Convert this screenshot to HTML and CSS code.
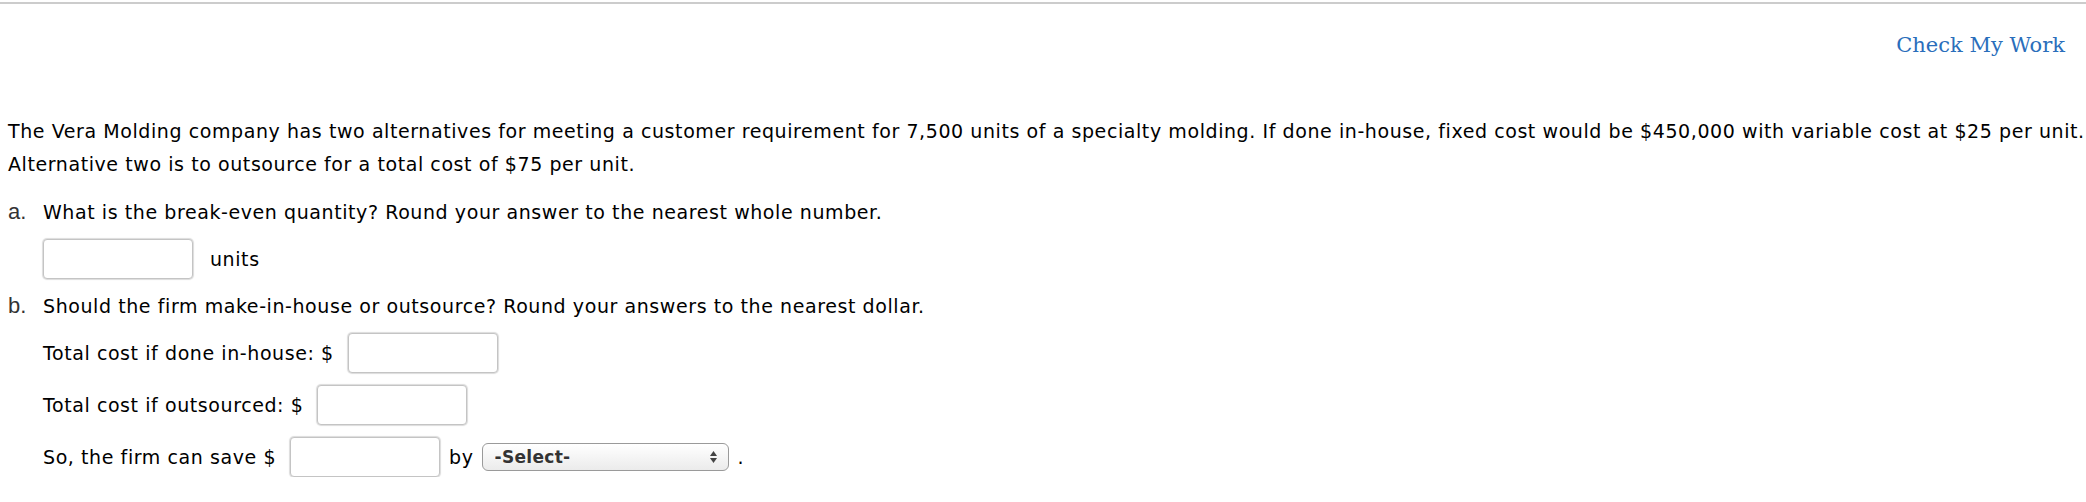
FILE: index.html
```html
<!DOCTYPE html>
<html>
<head>
	<title>Break-even Problem</title>
	<link rel="stylesheet" href="styles.css">
</head>
<body>
	<!-- Top rule with the check link on the right. -->
	<div class="topbar">
		<a class="check-work" href="#">Check My Work</a>
	</div>

	<div class="problem">
		<p class="intro">The Vera Molding company has two alternatives for meeting a customer requirement for 7,500 units of a specialty molding. If done in-house, fixed cost would be $450,000 with variable cost at $25 per unit.<br>Alternative two is to outsource for a total cost of $75 per unit.</p>

		<ol class="parts">
			<li class="part part-a">
				<span class="marker">a.</span>
				<div class="part-body">
					<div class="question">What is the break-even quantity? Round your answer to the nearest whole number.</div>
					<div class="answer-row">
						<input type="text" class="answer first">
						<span class="unit">units</span>
					</div>
				</div>
			</li>
			<li class="part part-b">
				<span class="marker">b.</span>
				<div class="part-body">
					<div class="question">Should the firm make-in-house or outsource? Round your answers to the nearest dollar.</div>
					<div class="answer-row">
						<span>Total cost if done in-house: $</span>
						<input type="text" class="answer">
					</div>
					<div class="answer-row">
						<span>Total cost if outsourced: $</span>
						<input type="text" class="answer">
					</div>
					<div class="answer-row">
						<span>So, the firm can save $</span>
						<input type="text" class="answer">
						<span class="by">by</span>
						<span class="select-wrap">
							<select class="choice">
								<option>-Select-</option>
								<option>making in-house</option>
								<option>outsourcing</option>
							</select>
							<svg class="select-arrows" width="9" height="14" viewBox="0 0 9 14">
								<path d="M4.5 1 L8 6 L1 6 Z" fill="#444"/>
								<path d="M4.5 13 L8 8 L1 8 Z" fill="#444"/>
							</svg>
						</span>
						<span class="dot">.</span>
					</div>
				</div>
			</li>
		</ol>
	</div>
</body>
</html>
```

FILE: styles.css
```css
/*
	Page base: Verdana-like text, no default margin.
*/
body {
	margin: 0;
	font-family: "DejaVu Sans", Verdana, sans-serif;
	font-size: 19px;
	letter-spacing: 0.58px;
	color: #000;
	background: #fff;
}

/*
	Thin grey rule across the top, link sits right.
*/
.topbar {
	margin-top: 2px;
	border-top: 2px solid #cccccc;
	display: flex;
	justify-content: flex-end;
	padding: 26px 21px 0 0;
	height: 85px;
}

.check-work {
	font-family: "DejaVu Serif", Georgia, serif;
	font-size: 21px;
	letter-spacing: 0;
	line-height: 30px;
	color: #2a6ebb;
	text-decoration: none;
}

.problem {
	padding: 0 0 0 8px;
}

/* The first sentence runs right up to the window edge. */
.intro {
	margin: 0;
	line-height: 33px;
	white-space: nowrap;
}

.parts {
	list-style: none;
	margin: 0;
	padding: 0;
}

.part {
	display: flex;
	margin-top: 12px;
}

.part-a {
	margin-top: 16px;
}

.marker {
	width: 35px;
	flex: none;
	color: #333;
	font-family: "Liberation Sans", Arial, sans-serif;
	font-size: 22px;
	letter-spacing: 0;
	line-height: 30px;
}

.question {
	line-height: 30px;
}

.answer-row {
	display: flex;
	align-items: center;
	height: 40px;
	margin-top: 12px;
}

.answer {
	width: 150px;
	height: 40px;
	box-sizing: border-box;
	border: 1px solid #c4c4c4;
	box-shadow: 0 0 1px 1px #dcdcdc;
	border-radius: 4px;
	margin: 0 0 0 14px;
	padding: 0 6px;
	font: inherit;
}

.answer.first {
	margin-left: 0;
}

.unit {
	margin-left: 17px;
}

.by {
	margin-left: 9px;
}

.select-wrap {
	position: relative;
	display: inline-block;
	margin-left: 8px;
	height: 28px;
}

.choice {
	appearance: none;
	-webkit-appearance: none;
	width: 247px;
	height: 28px;
	box-sizing: border-box;
	border: 1px solid #9a9a9a;
	border-radius: 6px;
	background: linear-gradient(#ffffff, #ebebeb);
	font-family: "DejaVu Sans", Verdana, sans-serif;
	font-size: 17px;
	font-weight: bold;
	letter-spacing: 0.3px;
	color: #333;
	padding: 0 0 0 12px;
	margin: 0;
}

.select-arrows {
	position: absolute;
	right: 11px;
	top: 7px;
	pointer-events: none;
}

.dot {
	margin-left: 9px;
}
```
